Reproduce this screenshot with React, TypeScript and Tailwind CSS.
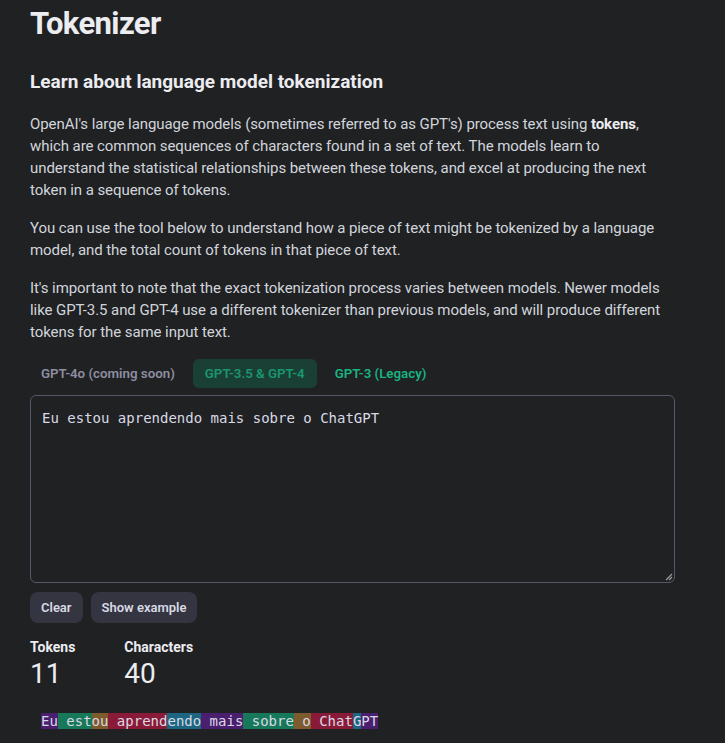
import React from "react";

const tokens = [
  { text: "Eu", color: "bg-[#4b1f6f]" },
  { text: " est", color: "bg-[#17795a]" },
  { text: "ou", color: "bg-[#7d5b2c]" },
  { text: " aprend", color: "bg-[#8a1b38]" },
  { text: "endo", color: "bg-[#1c6682]" },
  { text: " mais", color: "bg-[#4b1f6f]" },
  { text: " sobre", color: "bg-[#17795a]" },
  { text: " o", color: "bg-[#7d5b2c]" },
  { text: " Chat", color: "bg-[#8a1b38]" },
  { text: "G", color: "bg-[#1c6682]" },
  { text: "PT", color: "bg-[#4b1f6f]" },
];

const input = "Eu estou aprendendo mais sobre o ChatGPT";

export default function App() {
  return (
    <div className="min-h-[743px] w-full bg-[#202123] font-['Roboto',sans-serif] text-[#d1d5db]">
      <div className="w-[645px] ml-[30px]">
        <h1 className="text-[31px] leading-[48px] font-bold text-[#ececf1] tracking-[-0.02em]">
          Tokenizer
        </h1>

        <h2 className="mt-[20px] text-[19px] leading-[28px] font-bold text-[#ececf1]">
          Learn about language model tokenization
        </h2>

        <div className="mt-[17px] flex flex-col gap-[16px] text-[15px] leading-[22px] tracking-[-0.005em]">
          <p>
            OpenAI's large language models (sometimes referred to as GPT's) process text using{" "}
            <b className="text-[#ececf1]">tokens</b>,<br />
            which are common sequences of characters found in a set of text. The models learn to
            <br />
            understand the statistical relationships between these tokens, and excel at producing the next
            <br />
            token in a sequence of tokens.
          </p>
          <p>
            You can use the tool below to understand how a piece of text might be tokenized by a language
            <br />
            model, and the total count of tokens in that piece of text.
          </p>
          <p>
            It's important to note that the exact tokenization process varies between models. Newer models
            <br />
            like GPT-3.5 and GPT-4 use a different tokenizer than previous models, and will produce different
            <br />
            tokens for the same input text.
          </p>
        </div>

        <div className="mt-[16px] flex items-center text-[13.3px] font-semibold">
          <button className="px-[11px] h-[29px] rounded-md text-[#8e8ea0]">GPT-4o (coming soon)</button>
          <button className="ml-[7px] px-[12px] h-[29px] rounded-md bg-[#1a4035] text-[#1a9570]">
            GPT-3.5 &amp; GPT-4
          </button>
          <button className="ml-[6px] px-[12px] h-[29px] rounded-md text-[#19b381]">GPT-3 (Legacy)</button>
        </div>

        <div className="mt-[7px] h-[188px] rounded-md border border-[#565869] relative">
          <div className="px-[11px] pt-[12px] font-['DejaVu_Sans_Mono',monospace] text-[14px] leading-[20px] text-[#d9d9e3]">
            {input}
          </div>
          <svg className="absolute right-[1px] bottom-[1px]" width="9" height="9" viewBox="0 0 9 9">
            <path d="M8 2 L2 8 M8 5 L5 8" stroke="#9a9aa6" strokeWidth="1.2" />
          </svg>
        </div>

        <div className="mt-[9px] flex gap-[8px] text-[13px] font-semibold text-[#d9d9e3]">
          <button className="h-[31px] px-[11px] rounded-lg bg-[#343541]">Clear</button>
          <button className="h-[31px] px-[11px] rounded-lg bg-[#343541]">Show example</button>
        </div>

        <div className="mt-[15px] flex gap-[49px] text-[#ececf1]">
          <div className="flex flex-col">
            <span className="text-[14px] leading-[18px] font-bold">Tokens</span>
            <span className="text-[28px] leading-[36px] font-normal">11</span>
          </div>
          <div className="flex flex-col">
            <span className="text-[14px] leading-[18px] font-bold">Characters</span>
            <span className="text-[28px] leading-[36px] font-normal">{input.length}</span>
          </div>
        </div>

        <div className="mt-[20px] pl-[11px] font-['DejaVu_Sans_Mono',monospace] text-[14px] leading-[18px] text-[#d9d9e3] whitespace-pre">
          {tokens.map((t, i) => (
            <span key={i} className={t.color}>
              {t.text}
            </span>
          ))}
        </div>
      </div>
    </div>
  );
}
